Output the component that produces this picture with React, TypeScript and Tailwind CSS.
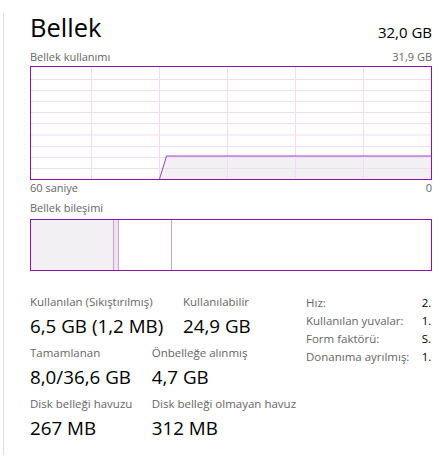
import React from "react";

const hLines = [13, 24, 35, 46, 57, 68.5, 80, 91, 102];
const vLines = [61, 129, 197, 265, 333];

function UsageChart() {
  return (
    <svg width="402" height="114" viewBox="0 0 402 114" className="block">
      <rect x="0" y="0" width="402" height="114" fill="#ffffff" />
      <polygon points="129.5,113 136.5,90 401,90 401,113" fill="#f3f0f4" />
      {hLines.map((y) => (
        <line key={"h" + y} x1="1" x2="401" y1={y + 0.5} y2={y + 0.5} stroke="#eddff1" strokeWidth="1" />
      ))}
      {vLines.map((x) => (
        <line key={"v" + x} x1={x + 0.5} x2={x + 0.5} y1="1" y2="113" stroke="#eddff1" strokeWidth="1" />
      ))}
      <polyline points="129.5,113 136.5,90 401,90" fill="none" stroke="#9a3fbf" strokeWidth="1" />
      <rect x="0.5" y="0.5" width="401" height="113" fill="none" stroke="#8b12ae" strokeWidth="1" />
    </svg>
  );
}

function Stat({ label, value, width }: { label: string; value: string; width?: string }) {
  return (
    <div className={width}>
      <div className="text-[11.5px] leading-[16px] text-[#666666] whitespace-nowrap">{label}</div>
      <div className="mt-[3px] text-[18.8px] leading-[26px] text-black whitespace-nowrap">{value}</div>
    </div>
  );
}

export default function App() {
  return (
    <div className="w-[447px] h-[470px] bg-white flex overflow-hidden font-['Open_Sans',sans-serif]">
      <div className="ml-[3px] mt-[13px] w-px h-[442px] bg-[#dedede] shrink-0" />
      <div className="ml-[26px] w-[402px] flex flex-col shrink-0">
        <div className="mt-[10.5px] flex justify-between items-end">
          <div className="text-[25.5px] leading-[32px] text-black">Bellek</div>
          <div className="text-[15px] leading-[21px] text-black">32,0 GB</div>
        </div>
        <div className="mt-[6.5px] flex justify-between text-[11px] leading-[15px] text-[#666666]">
          <span>Bellek kullanımı</span>
          <span>31,9 GB</span>
        </div>
        <div className="mt-[2px]">
          <UsageChart />
        </div>
        <div className="flex justify-between text-[11px] leading-[15px] text-[#666666]">
          <span>60 saniye</span>
          <span>0</span>
        </div>
        <div className="mt-[5px] text-[11px] leading-[15px] text-[#666666]">Bellek bileşimi</div>
        <div className="mt-[4px] h-[52px] border border-[#8b12ae] flex">
          <div className="w-[82px] bg-[#f3f0f4]" />
          <div className="w-[6px] border-x border-[#c9a5d7] bg-[#efe4f2]" />
          <div className="w-[53px] border-r border-[#c9a5d7] bg-white" />
          <div className="flex-1 bg-white" />
        </div>
        <div className="mt-[23px] flex items-start">
          <div className="w-[276px] flex flex-col">
            <div className="flex">
              <Stat label="Kullanılan (Sıkıştırılmış)" value="6,5 GB (1,2 MB)" width="w-[153px]" />
              <Stat label="Kullanılabilir" value="24,9 GB" />
            </div>
            <div className="mt-[6px] flex">
              <Stat label="Tamamlanan" value="8,0/36,6 GB" width="w-[121.7px]" />
              <Stat label="Önbelleğe alınmış" value="4,7 GB" />
            </div>
            <div className="mt-[6px] flex">
              <Stat label="Disk belleği havuzu" value="267 MB" width="w-[121.7px]" />
              <Stat label="Disk belleği olmayan havuz" value="312 MB" />
            </div>
          </div>
          <div className="w-[126px] overflow-hidden text-[11.5px] leading-[18px]">
            {[
              ["Hız:", "2."],
              ["Kullanılan yuvalar:", "1."],
              ["Form faktörü:", "S."],
              ["Donanıma ayrılmış:", "1."],
            ].map(([k, v]) => (
              <div key={k} className="flex whitespace-nowrap">
                <span className="w-[115.7px] shrink-0 text-[#666666]">{k}</span>
                <span className="text-black">{v}</span>
              </div>
            ))}
          </div>
        </div>
      </div>
    </div>
  );
}
